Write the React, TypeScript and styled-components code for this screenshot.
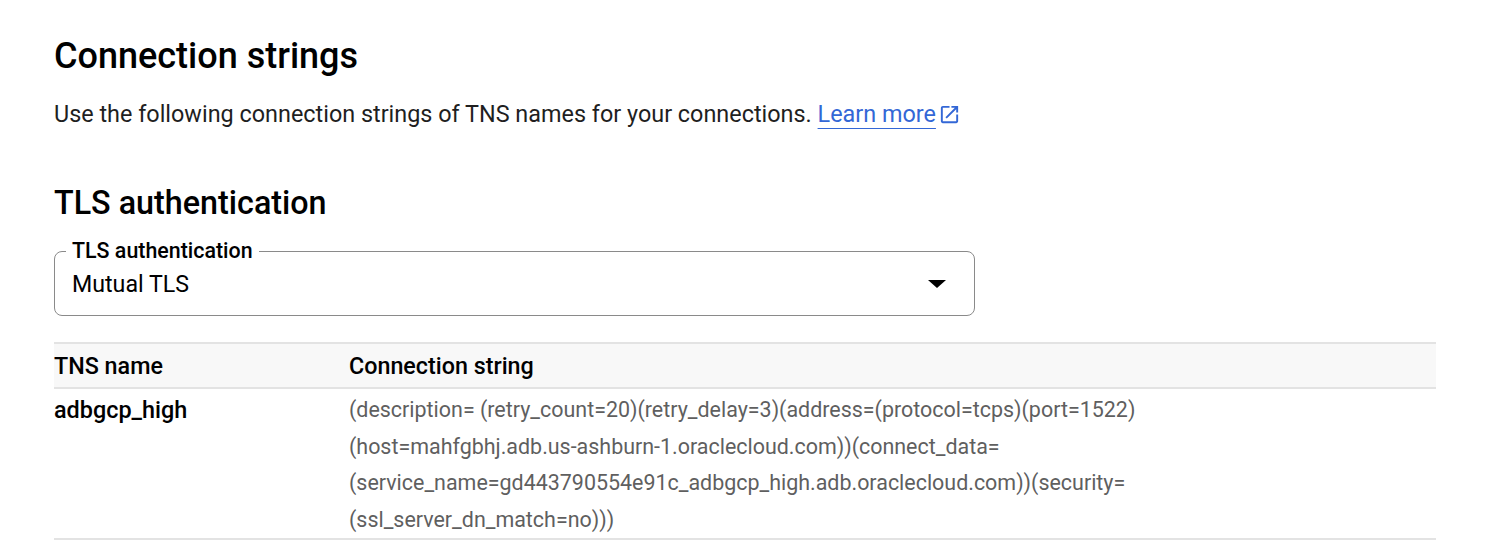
import React from "react";
import styled, { createGlobalStyle } from "styled-components";

const Global = createGlobalStyle`
  html, body { margin: 0; padding: 0; background: #fff; }
  body { font-family: Roboto, "Noto Sans", Arial, sans-serif; color: #000; }
`;

const Page = styled.div`
  padding: 34px 68px 0 54px;
  width: 1382px;
`;

const Title = styled.h1`
  margin: 0;
  font-size: 36px;
  line-height: 44px;
  font-weight: 500;
`;

const Lead = styled.p`
  margin: 21px 0 0;
  font-size: 23.4px;
  line-height: 30px;
  color: #1f1f1f;
`;

const Link = styled.a`
  color: #3367d6;
  text-decoration: underline;
  text-underline-offset: 6px;
  text-decoration-thickness: 1px;
  display: inline-flex;
  align-items: center;
  gap: 2px;
`;

const Icon = styled.svg`
  width: 23px;
  height: 23px;
  fill: #3367d6;
  flex: none;
`;

const SubTitle = styled.h2`
  margin: 54px 0 0;
  font-size: 32.3px;
  line-height: 40px;
  font-weight: 500;
`;

const Select = styled.div`
  position: relative;
  margin-top: 28px;
  width: 921px;
  box-sizing: border-box;
  height: 65px;
  border: 1px solid #8a8a8a;
  border-radius: 8px;
  padding: 0 28px 0 17px;
  display: flex;
  align-items: center;
  justify-content: space-between;
`;

const Label = styled.span`
  position: absolute;
  left: 11px;
  top: -12px;
  background: #fff;
  font-size: 21.4px;
  font-weight: 500;
  padding: 0 6px;
  line-height: 22px;
`;

const Value = styled.span`
  font-size: 23.2px;
  margin-top: 1px;
`;

const Arrow = styled.span`
  width: 0;
  height: 0;
  border-left: 9px solid transparent;
  border-right: 9px solid transparent;
  border-top: 8px solid #000;
  margin-top: 1px;
`;

const Table = styled.div`
  margin-top: 26px;
  display: grid;
  grid-template-columns: 295px 1fr;
  border-top: 2px solid #e3e3e3;
`;

const Head = styled.div`
  background: #f8f8f8;
  border-bottom: 2px solid #e3e3e3;
  height: 43px;
  display: flex;
  align-items: center;
  font-size: 23.3px;
  font-weight: 500;
`;

const Cell = styled.div<{ $muted?: boolean }>`
  border-bottom: 2px solid #e3e3e3;
  padding: 3px 0 0;
  font-size: ${(p) => (p.$muted ? "21.45px" : "23.4px")};
  line-height: 36.5px;
  font-weight: ${(p) => (p.$muted ? 400 : 500)};
  color: ${(p) => (p.$muted ? "#5f5f5f" : "#000")};
`;

const Ext = () => (
  <Icon viewBox="0 0 24 24">
    <path d="M19 19H5V5h7V3H5c-1.11 0-2 .9-2 2v14c0 1.1.89 2 2 2h14c1.1 0 2-.9 2-2v-7h-2v7zM14 3v2h3.59l-9.83 9.83 1.41 1.41L19 6.41V10h2V3h-7z" />
  </Icon>
);

export default function App() {
  return (
    <Page>
      <Global />
      <Title>Connection strings</Title>
      <Lead>
        Use the following connection strings of TNS names for your connections.{" "}
        <Link href="#">
          Learn more <Ext />
        </Link>
      </Lead>
      <SubTitle>TLS authentication</SubTitle>
      <Select>
        <Label>TLS authentication</Label>
        <Value>Mutual TLS</Value>
        <Arrow />
      </Select>
      <Table>
        <Head>TNS name</Head>
        <Head>Connection string</Head>
        <Cell>adbgcp_high</Cell>
        <Cell $muted>
          (description= (retry_count=20)(retry_delay=3)(address=(protocol=tcps)(port=1522)
          <br />
          (host=mahfgbhj.adb.us-ashburn-1.oraclecloud.com))(connect_data=
          <br />
          (service_name=gd443790554e91c_adbgcp_high.adb.oraclecloud.com))(security=
          <br />
          (ssl_server_dn_match=no)))
        </Cell>
      </Table>
    </Page>
  );
}
